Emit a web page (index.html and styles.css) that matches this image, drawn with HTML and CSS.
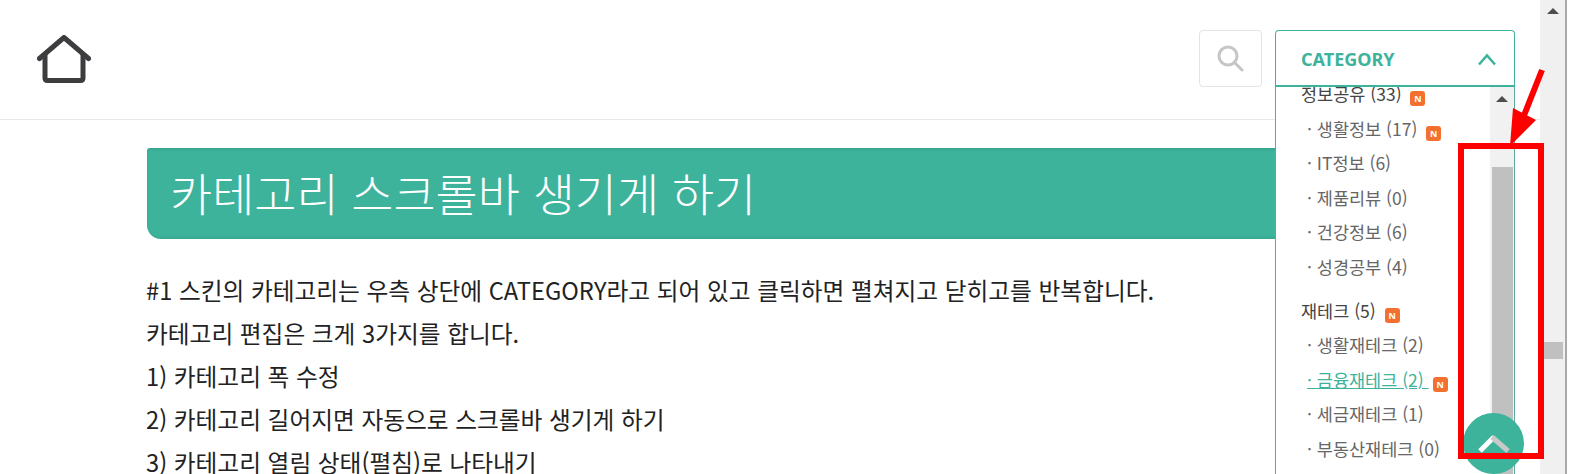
FILE: index.html
```html
<!DOCTYPE html>
<html lang="ko">
  <head>
    <meta charset="utf-8">
    <title>카테고리 스크롤바 생기게 하기</title>
    <link rel="stylesheet" href="styles.css">
  </head>
  <body>
    <div class="page">
      <header class="top">
        <a class="home">
          <svg width="54" height="48" viewBox="0 0 54 48" fill="none" stroke="#3d3d40" stroke-width="5" stroke-linecap="round" stroke-linejoin="round">
            <path d="M2.5 23.5 L27 2.5 L51.5 23.5"/>
            <path d="M8 20 V43 Q8 45.5 10.5 45.5 H43.5 Q46 45.5 46 43 V20"/>
          </svg>
        </a>
        <div class="search">
          <svg width="27" height="27" viewBox="0 0 27 27" fill="none" stroke="#c6c6c6" stroke-width="3" stroke-linecap="round">
            <circle cx="11" cy="11" r="9"/>
            <path d="M17.5 17.5 L25 25"/>
          </svg>
        </div>
      </header>
      <main class="post">
        <h1 class="title">카테고리 스크롤바 생기게 하기</h1>
        <p>#1 스킨의 카테고리는 우측 상단에 CATEGORY라고 되어 있고 클릭하면 펼쳐지고 닫히고를 반복합니다.</p>
        <p>카테고리 편집은 크게 3가지를 합니다.</p>
        <p>1) 카테고리 폭 수정</p>
        <p>2) 카테고리 길어지면 자동으로 스크롤바 생기게 하기</p>
        <p>3) 카테고리 열림 상태(펼침)로 나타내기</p>
      </main>
    </div>
    <div class="page-scroll">
      <span class="arrow-up"></span>
      <span class="page-thumb"></span>
    </div>

    <aside class="category">
      <div class="category-head">
        <span>CATEGORY</span>
        <svg width="19" height="13" viewBox="0 0 19 13" fill="none" stroke="#3eb39c" stroke-width="2.6">
          <path d="M2 11.5 L10 2.5 L18 11.5"/>
        </svg>
      </div>
      <div class="category-body">
        <ul class="category-list">
          <li class="parent">정보공유 (33) <span class="new">N</span></li>
          <li>· 생활정보 (17) <span class="new">N</span></li>
          <li>· IT정보 (6)</li>
          <li>· 제품리뷰 (0)</li>
          <li>· 건강정보 (6)</li>
          <li>· 성경공부 (4)</li>
          <li class="parent next">재테크 (5) <span class="new">N</span></li>
          <li>· 생활재테크 (2)</li>
          <li class="active"><u>· 금융재테크 (2) </u> <span class="new">N</span></li>
          <li>· 세금재테크 (1)</li>
          <li>· 부동산재테크 (0)</li>
        </ul>
        <div class="list-scroll">
          <span class="arrow-up"></span>
          <span class="list-thumb"></span>
        </div>
      </div>
    </aside>

    <a class="to-top">
      <svg width="32" height="20" viewBox="0 0 32 20" fill="none" stroke-width="5">
        <path d="M2 18 L16 4" stroke="#fff"/>
        <path d="M14 4 L30 18" stroke="#c9c9c9"/>
      </svg>
    </a>

    <div class="mark"></div>
    <svg class="mark-arrow" width="44" height="84" viewBox="0 0 44 84">
      <path d="M40 2 L21 50" stroke="#fe0000" stroke-width="6" fill="none"/>
      <path d="M11 40 L34 52 L8 78 Z" fill="#fe0000"/>
    </svg>
  </body>
</html>
```

FILE: styles.css
```css
html,
body {
  height: 100%;
}
body {
  margin: 0;
  display: flex;
  overflow: hidden;
  background-color: #ffffff;
  color: #222222;
  font-family: "Noto Sans CJK KR", "Noto Sans", sans-serif;
}
.page {
  width: 1540px;
  flex: none;
}
.top {
  height: 120px;
  box-sizing: border-box;
  border-bottom: 1px solid #e8e8e8;
  display: flex;
  align-items: flex-start;
  padding: 30px 278px 0 37px;
}
.home {
  margin-top: 5px;
  height: 48px;
  filter: blur(0.4px);
}
.search {
  margin-left: auto;
  width: 61px;
  height: 55px;
  border: 1px solid #e3e3e3;
  border-radius: 4px;
  display: flex;
  align-items: center;
  justify-content: center;
}
.post {
  padding: 28px 147px 0;
}
.title {
  margin: 0 0 30px;
  height: 91px;
  padding-left: 23px;
  background-color: #3eb39c;
  box-shadow: inset 0 2px 2px rgba(0, 0, 0, 0.08), inset 0 -2px 2px rgba(0, 0, 0, 0.06);
  border-radius: 3px 3px 3px 14px;
  color: #ffffff;
  font-size: 45.8px;
  font-weight: 300;
  line-height: 88px;
  white-space: nowrap;
}
.post p {
  margin: 0 0 0 -1px;
  font-size: 23.7px;
  line-height: 43px;
  white-space: nowrap;
}
.page-scroll {
  width: 25px;
  flex: none;
  background-color: #f0f0f0;
  border-right: 2px solid #a9a9a9;
  position: relative;
}
.arrow-up {
  display: block;
  width: 0;
  margin: 8px auto 0;
  border-left: 6px solid transparent;
  border-right: 6px solid transparent;
  border-bottom: 6px solid #4d4d4d;
}
.page-thumb {
  display: block;
  margin: 328px 2px 0 4px;
  height: 17px;
  background-color: #c0c0c0;
}
.category {
  position: absolute;
  left: 1275px;
  top: 30px;
  width: 240px;
  bottom: 0;
  display: flex;
  flex-direction: column;
}
.category-head {
  height: 57px;
  flex: none;
  box-sizing: border-box;
  background-color: #ffffff;
  border: 1px solid #3eb39c;
  border-bottom-width: 2px;
  border-radius: 4px 4px 0 0;
  padding: 2px 18px 0 25px;
  display: flex;
  align-items: center;
  justify-content: space-between;
  color: #3eb39c;
  font-family: "Noto Sans", sans-serif;
  font-size: 18px;
  font-weight: 700;
}
.category-body {
  flex: 1;
  min-height: 0;
  display: flex;
  overflow: hidden;
  background-color: #ffffff;
  border-left: 1px solid #5fa9a0;
  border-right: 1px solid #5fa9a0;
}
.category-list {
  flex: 1;
  list-style: none;
  margin: -10px 0 0;
  padding: 0 0 0 25px;
  font-size: 17.5px;
  line-height: 34.5px;
  color: #666666;
  white-space: nowrap;
}
.category-list li {
  padding-left: 6px;
  height: 34.5px;
}
.category-list .parent {
  padding-left: 0;
  color: #444444;
}
.category-list .next {
  margin-top: 9.5px;
}
.category-list .active {
  color: #3eb39c;
}
.new {
  display: inline-block;
  width: 15px;
  height: 15px;
  margin-left: 4px;
  border-radius: 3px;
  background-color: #f4702f;
  color: #ffffff;
  font-family: "Noto Sans", sans-serif;
  font-size: 9px;
  font-weight: 700;
  line-height: 15px;
  text-align: center;
  vertical-align: -1px;
}
.list-scroll {
  width: 24px;
  flex: none;
  background-color: #f1f1f1;
}
.list-scroll .arrow-up {
  margin-top: 9px;
}
.list-thumb {
  display: block;
  margin: 65px 1px 0 2px;
  height: 400px;
  background-color: #c0c0c0;
}
.to-top {
  position: absolute;
  left: 1463px;
  top: 413px;
  width: 61px;
  height: 61px;
  border-radius: 50%;
  background-color: #3eb39c;
  display: flex;
  align-items: center;
  justify-content: center;
}
.to-top svg {
  margin-bottom: 2px;
}
.mark {
  position: absolute;
  left: 1458px;
  top: 143px;
  width: 74px;
  height: 304px;
  border: 6px solid #fe0000;
}
.mark-arrow {
  position: absolute;
  left: 1502px;
  top: 68px;
}
```
